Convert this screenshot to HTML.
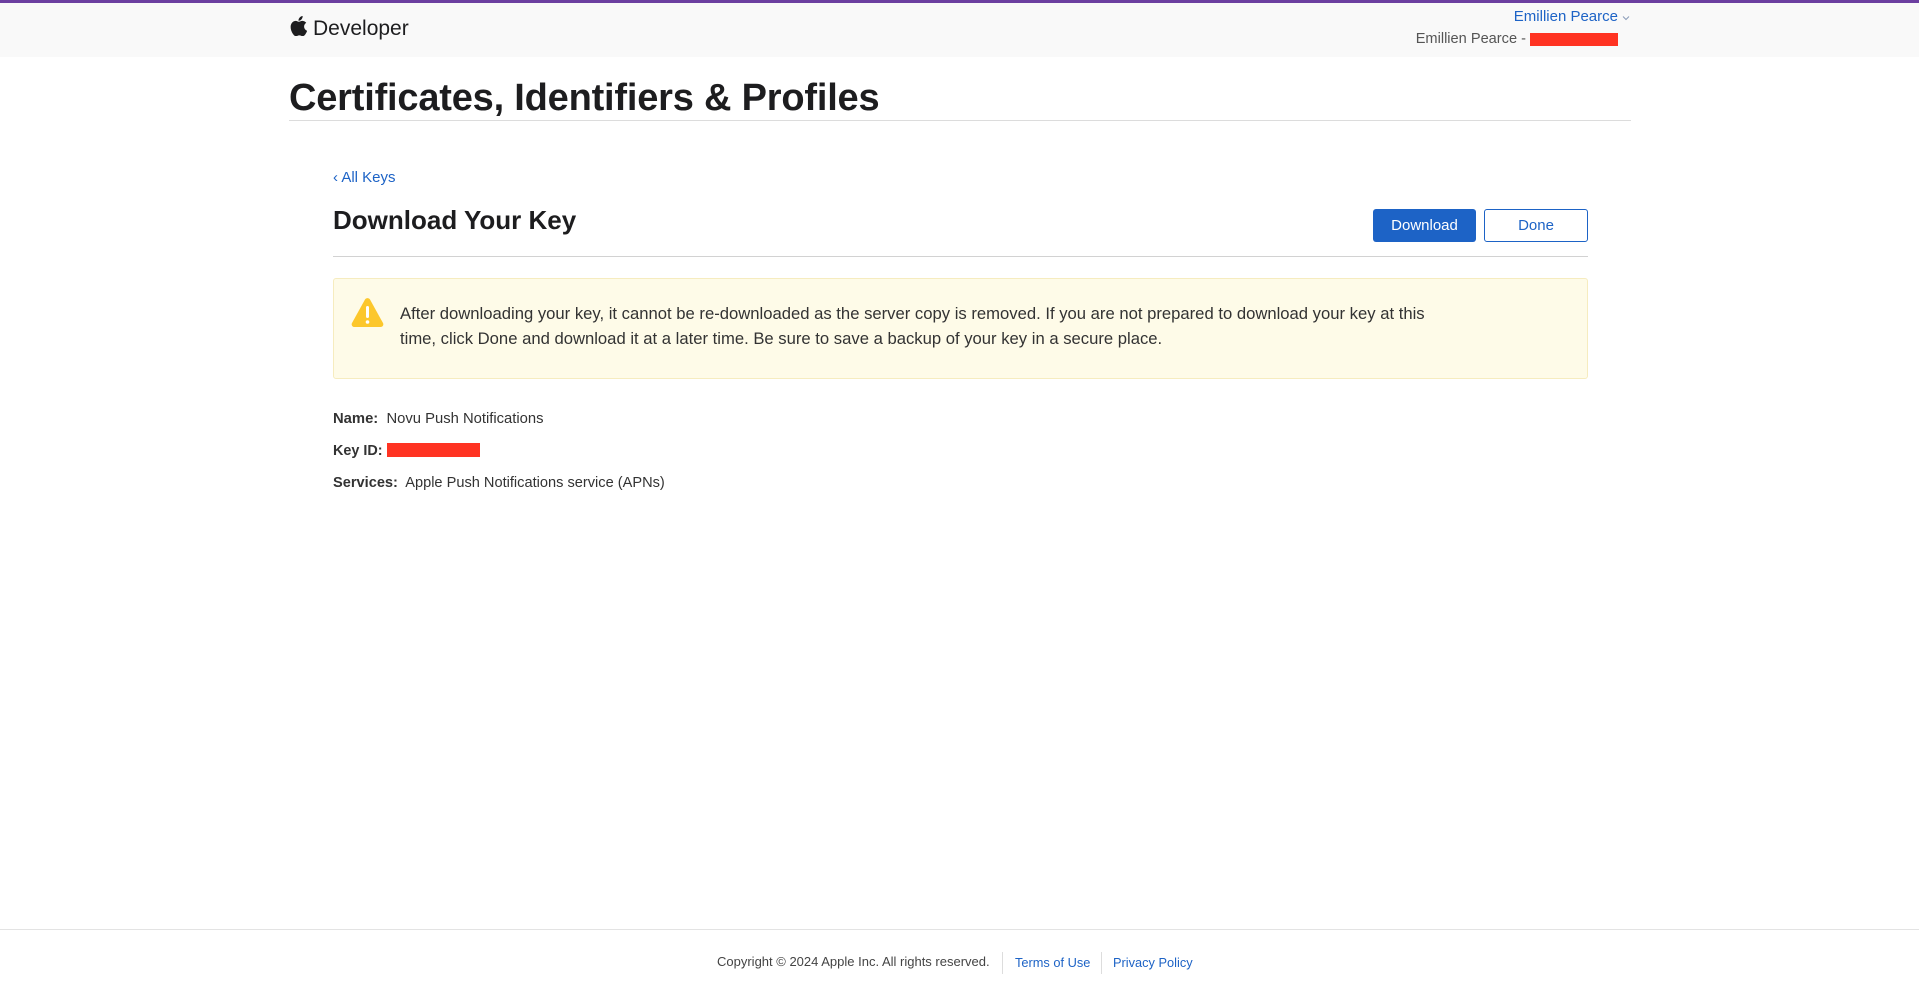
<!DOCTYPE html>
<html><head><meta charset="utf-8"><style>
*{margin:0;padding:0;box-sizing:border-box}
body{width:1919px;height:996px;position:relative;background:#fff;font-family:"Liberation Sans",sans-serif;color:#1d1d1f;overflow:hidden}
.a{position:absolute;white-space:nowrap}
.blue{color:#1d63c6}
</style></head><body>
<div class="a" style="left:0;top:0;width:1919px;height:3px;background:#6c3fa0"></div>
<div class="a" style="left:0;top:3px;width:1919px;height:54px;background:#f9f9f9"></div>
<svg class="a" style="left:290px;top:16px" width="17" height="20" viewBox="0 0 17 20"><path fill="#1d1d1f" d="M14.1 10.6c0-2.5 2-3.6 2.1-3.7-1.2-1.7-3-1.900-3.6-2-1.5-.2-3 .9-3.700.9-.8 0-2-.9-3.300-.9C3.9 5 2.3 6 1.5 7.5c-1.8 3.100-.5 7.700 1.300 10.200.9 1.200 1.900 2.600 3.200 2.500 1.300 0 1.800-.8 3.300-.8 1.600 0 2 .8 3.300.8 1.400 0 2.300-1.200 3.100-2.500 1-1.400 1.400-2.800 1.400-2.900 0 0-2.900-1.100-3-4.200zM11.6 3.2c.7-.9 1.200-2 1-3.200-1 0-2.300.7-3 1.600-.7.8-1.200 2-1.100 3.100 1.200.1 2.300-.6 3.100-1.500z"/></svg>
<div class="a" style="left:313px;top:16px;font-size:21px;line-height:25px">Developer</div>
<div class="a blue" style="right:301px;top:8px;font-size:15px;line-height:18px">Emillien Pearce</div>
<svg class="a" style="left:1622px;top:15px" width="8" height="6" viewBox="0 0 8 6"><path d="M1 1.5l3 3 3-3" fill="none" stroke="#8a9bb8" stroke-width="1"/></svg>
<div class="a" style="right:393px;top:30px;font-size:14.6px;line-height:18px;color:#555">Emillien Pearce -</div>
<div class="a" style="left:1530px;top:33px;width:88px;height:13px;background:#ff3322"></div>
<div class="a" style="left:289px;top:76px;font-size:38px;line-height:44px;font-weight:bold;letter-spacing:-0.2px">Certificates, Identifiers &amp; Profiles</div>
<div class="a" style="left:289px;top:120px;width:1342px;height:1px;background:#dcdcdc"></div>
<div class="a blue" style="left:333px;top:169px;font-size:15px;line-height:18px">‹ All Keys</div>
<div class="a" style="left:333px;top:205px;font-size:26px;line-height:30px;font-weight:bold">Download Your Key</div>
<div class="a" style="left:1373px;top:209px;width:103px;height:33px;background:#1d63c6;border-radius:3px;color:#fff;font-size:15px;line-height:33px;text-align:center">Download</div>
<div class="a blue" style="left:1484px;top:209px;width:104px;height:33px;border:1px solid #1d63c6;border-radius:3px;font-size:15px;line-height:31px;text-align:center">Done</div>
<div class="a" style="left:333px;top:256px;width:1255px;height:1px;background:#d2d2d2"></div>
<div class="a" style="left:333px;top:278px;width:1255px;height:101px;background:#fefbe8;border:1px solid #f6ecbf;border-radius:3px"></div>
<svg class="a" style="left:351px;top:297px" width="33" height="31" viewBox="0 0 33 31"><path d="M14 2.5c1.1-1.9 3.9-1.9 5 0l13 23.5c1 1.9-.3 4-2.5 4H3.5C1.3 30 0 27.9 1 26z" fill="#fcc72c"/><rect x="15" y="9" width="3" height="12" rx="1.5" fill="#fff"/><circle cx="16.5" cy="25" r="1.8" fill="#fff"/></svg>
<div class="a" style="left:400px;top:301px;font-size:16.65px;line-height:25px;color:#333">After downloading your key, it cannot be re-downloaded as the server copy is removed. If you are not prepared to download your key at this<br>time, click Done and download it at a later time. Be sure to save a backup of your key in a secure place.</div>
<div class="a" style="left:333px;top:410px;font-size:14.8px;line-height:18px;color:#333"><b>Name:</b>&nbsp; Novu Push Notifications</div>
<div class="a" style="left:333px;top:442px;font-size:14.4px;line-height:18px;color:#333"><b>Key ID:</b></div>
<div class="a" style="left:387px;top:443px;width:93px;height:14px;background:#ff3322"></div>
<div class="a" style="left:333px;top:474px;font-size:14.6px;line-height:18px;color:#333"><b>Services:</b>&nbsp; Apple Push Notifications service (APNs)</div>
<div class="a" style="left:0;top:929px;width:1919px;height:1px;background:#e3e3e3"></div>
<div class="a" style="left:717px;top:954px;font-size:13px;line-height:16px;color:#444">Copyright © 2024 Apple Inc. All rights reserved.</div>
<div class="a" style="left:1002px;top:952px;width:1px;height:22px;background:#ddd"></div>
<div class="a blue" style="left:1015px;top:955px;font-size:12.8px;line-height:16px">Terms of Use</div>
<div class="a" style="left:1101px;top:952px;width:1px;height:22px;background:#ddd"></div>
<div class="a blue" style="left:1113px;top:955px;font-size:12.8px;line-height:16px">Privacy Policy</div>
</body></html>
